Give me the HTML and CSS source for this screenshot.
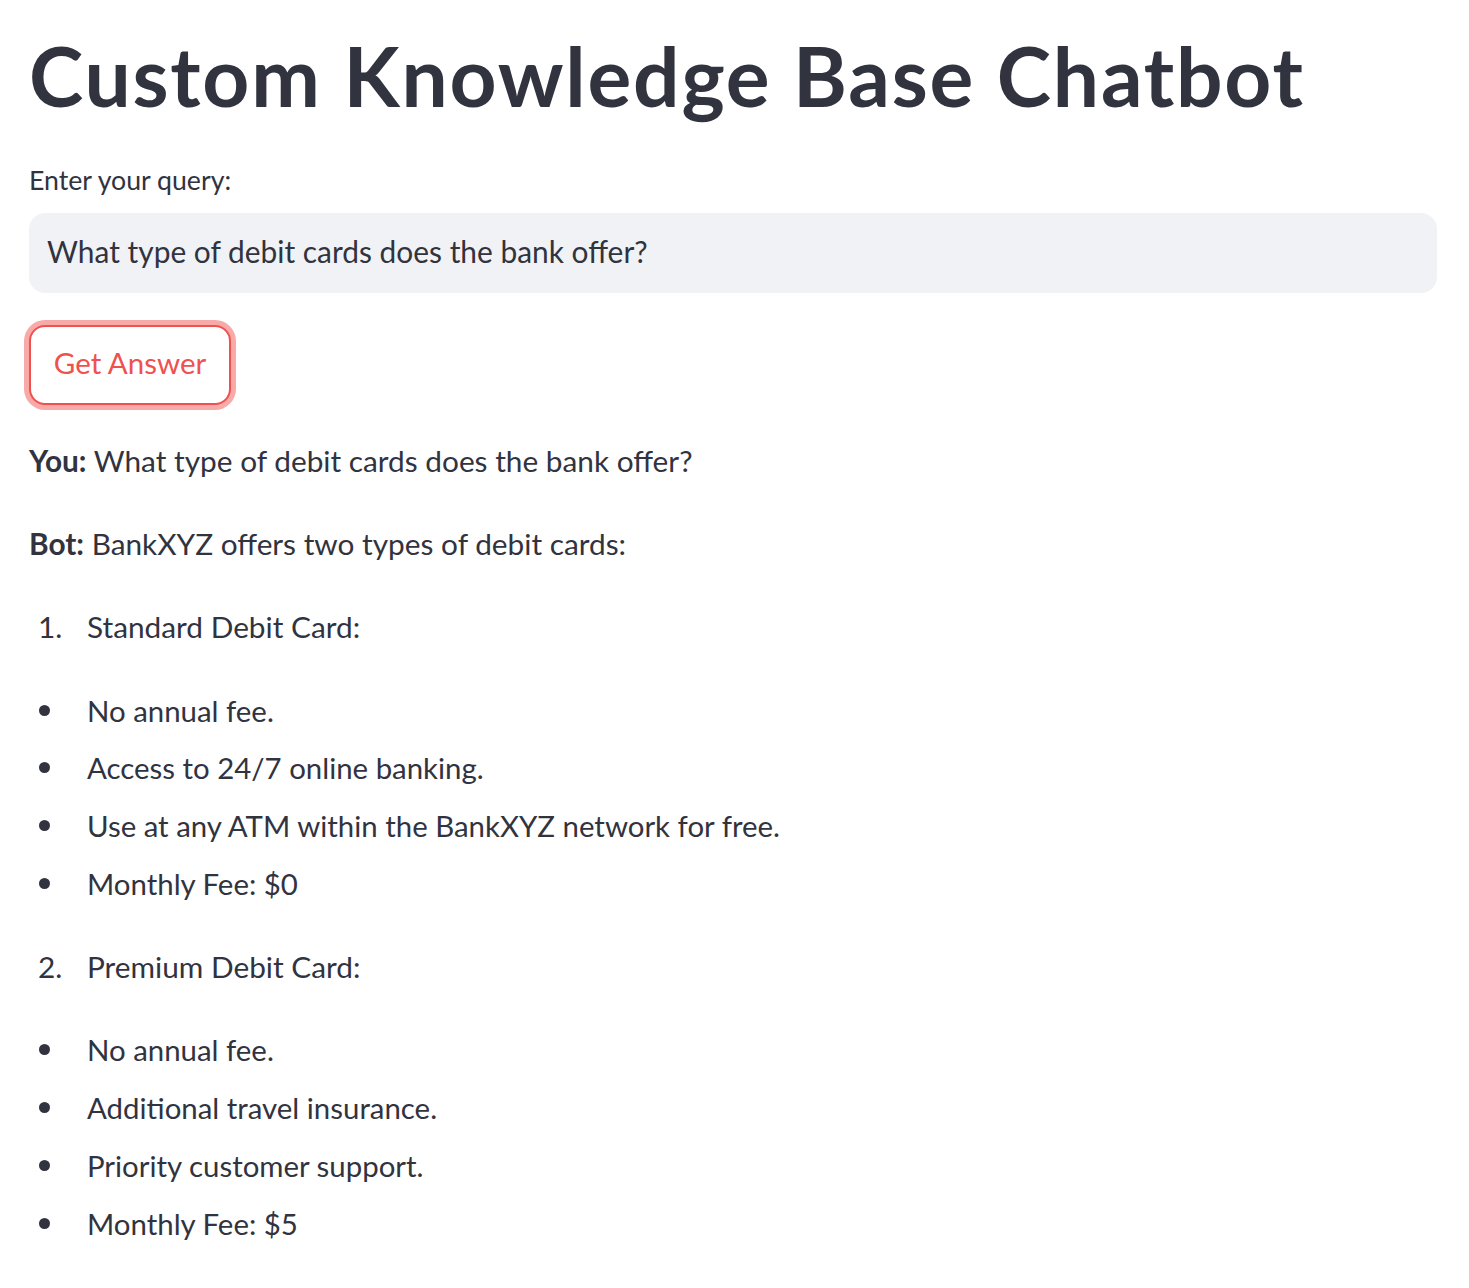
FILE: index.html
```html
<!DOCTYPE html>
<html lang="en">
<head>
<meta charset="utf-8">
<title>Custom Knowledge Base Chatbot</title>
<link rel="stylesheet" href="styles.css">
</head>
<body>
<main class="main">
  <h1 class="title">Custom Knowledge Base Chatbot</h1>
  <div class="field">
    <label class="label" for="q">Enter your query:</label>
    <div class="input-wrap">
      <input id="q" class="input" type="text" value="What type of debit cards does the bank offer?">
    </div>
  </div>
  <div class="btn-row">
    <button class="btn" type="button">Get Answer</button>
  </div>
  <div class="md">
    <p><strong>You:</strong> What type of debit cards does the bank offer?</p>
    <p><strong>Bot:</strong> BankXYZ offers two types of debit cards:</p>
    <ol class="ol" start="1">
      <li>Standard Debit Card:</li>
    </ol>
    <ul class="ul">
      <li>No annual fee.</li>
      <li>Access to 24/7 online banking.</li>
      <li>Use at any ATM within the BankXYZ network for free.</li>
      <li>Monthly Fee: $0</li>
    </ul>
    <ol class="ol" start="2">
      <li>Premium Debit Card:</li>
    </ol>
    <ul class="ul">
      <li>No annual fee.</li>
      <li>Additional travel insurance.</li>
      <li>Priority customer support.</li>
      <li>Monthly Fee: $5</li>
    </ul>
  </div>
</main>
</body>
</html>
```

FILE: styles.css
```css
*, *::before, *::after { box-sizing: border-box; }

html, body {
  margin: 0;
  background: #ffffff;
}

body {
  font-family: Lato, "Noto Sans", sans-serif;
  color: #31333F;
}

.main {
  display: flex;
  flex-direction: column;
  gap: 32px;
  padding: 26px 32px 40px 29px;
}

.title {
  margin: 0;
  font-size: 82px;
  font-weight: 700;
  line-height: 99px;
  letter-spacing: 1.8px;
  color: #31333F;
}

.field {
  display: flex;
  flex-direction: column;
}

.label {
  display: block;
  font-size: 26.7px;
  line-height: 46px;
  margin-bottom: 10px;
  color: #31333F;
}

.input-wrap {
  height: 80px;
  border-radius: 16px;
  background: #F0F2F6;
  display: flex;
  align-items: center;
}

.input {
  width: 100%;
  height: 100%;
  border: none;
  outline: none;
  background: transparent;
  padding: 0 19px 5px 18px;
  font-family: inherit;
  font-size: 29.9px;
  color: #31333F;
}

.btn-row {
  display: flex;
}

.btn {
  width: 202px;
  height: 80px;
  border: 2px solid #F0514E;
  border-radius: 16px;
  background: #ffffff;
  box-shadow: 0 0 0 5px #F7AAA8;
  color: #F0514E;
  font-family: inherit;
  font-size: 29.5px;
  padding: 0 0 5px;
  cursor: pointer;
}

.md {
  margin-top: -2px;
  font-size: 29.8px;
  line-height: 51.2px;
}

.md p {
  margin: 0 0 32px;
}

.md strong {
  font-weight: 700;
}

.ol, .ul {
  list-style: none;
  margin: 0 0 32px;
  padding: 0;
}

.ol li, .ul li {
  display: flex;
}

.ul li {
  font-size: 29.4px;
}

.ul li + li {
  margin-top: 6.6px;
}

.ol { counter-reset: item; }
.ol[start="2"] { counter-reset: item 1; }

.ol li { counter-increment: item; }

.ol li::before {
  content: counter(item) ".";
  flex: 0 0 58px;
  width: 58px;
  padding-left: 9px;
}

.ul li::before {
  content: "";
  flex: 0 0 11px;
  width: 11px;
  height: 11px;
  border-radius: 50%;
  background: #31333F;
  margin: 20px 37px 0 10px;
}
```
